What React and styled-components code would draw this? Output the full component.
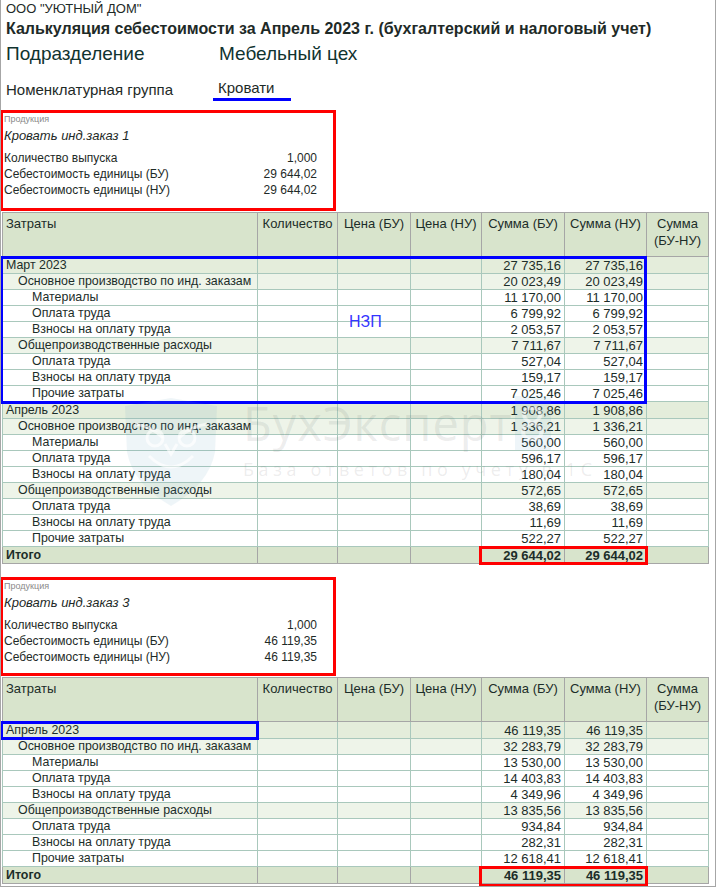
import React from "react";
import styled, { createGlobalStyle } from "styled-components";

const GlobalStyle = createGlobalStyle`
  body {
    margin: 0;
    background: #ffffff;
    font-family: "Liberation Sans", Arial, sans-serif;
    color: #1e2a27;
  }
`;

// widths of the table columns, px
const COLS = [255, 80, 73, 71, 83, 82, 62];
const HEAD_H = 45;

const firstTable = [
  { type: "group", name: "Март 2023", bu: "27 735,16", nu: "27 735,16" },
  { type: "sub", name: "Основное производство по инд. заказам", bu: "20 023,49", nu: "20 023,49" },
  { type: "item", name: "Материалы", bu: "11 170,00", nu: "11 170,00" },
  { type: "item", name: "Оплата труда", bu: "6 799,92", nu: "6 799,92" },
  { type: "item", name: "Взносы на оплату труда", bu: "2 053,57", nu: "2 053,57" },
  { type: "sub", name: "Общепроизводственные расходы", bu: "7 711,67", nu: "7 711,67" },
  { type: "item", name: "Оплата труда", bu: "527,04", nu: "527,04" },
  { type: "item", name: "Взносы на оплату труда", bu: "159,17", nu: "159,17" },
  { type: "item", name: "Прочие затраты", bu: "7 025,46", nu: "7 025,46" },
  { type: "group", name: "Апрель 2023", bu: "1 908,86", nu: "1 908,86" },
  { type: "sub", name: "Основное производство по инд. заказам", bu: "1 336,21", nu: "1 336,21" },
  { type: "item", name: "Материалы", bu: "560,00", nu: "560,00" },
  { type: "item", name: "Оплата труда", bu: "596,17", nu: "596,17" },
  { type: "item", name: "Взносы на оплату труда", bu: "180,04", nu: "180,04" },
  { type: "sub", name: "Общепроизводственные расходы", bu: "572,65", nu: "572,65" },
  { type: "item", name: "Оплата труда", bu: "38,69", nu: "38,69" },
  { type: "item", name: "Взносы на оплату труда", bu: "11,69", nu: "11,69" },
  { type: "item", name: "Прочие затраты", bu: "522,27", nu: "522,27" },
  { type: "total", name: "Итого", bu: "29 644,02", nu: "29 644,02" },
];

const secondTable = [
  { type: "group", name: "Апрель 2023", bu: "46 119,35", nu: "46 119,35" },
  { type: "sub", name: "Основное производство по инд. заказам", bu: "32 283,79", nu: "32 283,79" },
  { type: "item", name: "Материалы", bu: "13 530,00", nu: "13 530,00" },
  { type: "item", name: "Оплата труда", bu: "14 403,83", nu: "14 403,83" },
  { type: "item", name: "Взносы на оплату труда", bu: "4 349,96", nu: "4 349,96" },
  { type: "sub", name: "Общепроизводственные расходы", bu: "13 835,56", nu: "13 835,56" },
  { type: "item", name: "Оплата труда", bu: "934,84", nu: "934,84" },
  { type: "item", name: "Взносы на оплату труда", bu: "282,31", nu: "282,31" },
  { type: "item", name: "Прочие затраты", bu: "12 618,41", nu: "12 618,41" },
  { type: "total", name: "Итого", bu: "46 119,35", nu: "46 119,35" },
];

const rowBg = {
  group: "#e4eddb",
  sub: "#eef4e9",
  item: "#ffffff",
  total: "#d8e4cc",
};

const indent = { group: 3, sub: 15, item: 29, total: 3 };
const rowHeight = { group: 17, sub: 16, item: 16, total: 17 };

// top of row i, measured from the top of the table
const rowTop = (rows, i) =>
  HEAD_H + rows.slice(0, i).reduce((a, r) => a + rowHeight[r.type], 0);
const colLeft = (i) => COLS.slice(0, i).reduce((a, b) => a + b, 0);

const Page = styled.div`
  position: relative;
  width: 716px;
  min-height: 887px;
  box-sizing: border-box;
  border: 1px solid #a6a6a6;
  border-top: none;
  overflow: hidden;
`;

const Heading = styled.div`
  padding: 1px 0 0 5px;
`;

const Company = styled.div`
  font-size: 13px;
  line-height: 16px;
`;

const Title = styled.div`
  font-size: 16px;
  line-height: 20px;
  font-weight: bold;
  margin-top: 2px;
`;

const InfoRow = styled.div`
  display: grid;
  grid-template-columns: 207px auto;
  align-items: center;
  margin-top: ${(p) => p.$gap}px;
  font-size: ${(p) => p.$size}px;
  line-height: ${(p) => p.$line}px;
  color: ${(p) => (p.$dark ? "#10332f" : "#1e2a27")};
`;

const InfoValue = styled.span`
  justify-self: start;
  padding-left: ${(p) => p.$pad}px;
  width: ${(p) => (p.$underline ? "73px" : "auto")};
  border-bottom: ${(p) => (p.$underline ? "3px solid #0000ff" : "none")};
`;

const ProductBox = styled.div`
  box-sizing: border-box;
  width: 336px;
  height: ${(p) => p.$h}px;
  margin-top: ${(p) => p.$top}px;
  margin-left: -1px;
  border: 3px solid #ff0000;
  padding: 0 16px 0 1px;
`;

const Caption = styled.div`
  font-size: 9px;
  line-height: 12px;
  color: #8a8a8a;
`;

const ProductName = styled.div`
  font-size: 13px;
  line-height: 18px;
  font-style: italic;
  margin: 2px 0 5px;
`;

const ParamRow = styled.div`
  display: flex;
  justify-content: space-between;
  font-size: 12px;
  line-height: 16px;
`;

const TableWrap = styled.div`
  position: relative;
  margin-left: 1px;
  margin-top: ${(p) => p.$top}px;
  width: 706px;
`;

const Grid = styled.table`
  width: 706px;
  table-layout: fixed;
  border-collapse: collapse;
  font-size: 12px;
  color: #1c2d29;
`;

const Head = styled.th`
  height: ${HEAD_H - 1}px;
  padding: 2px 2px 0 ${(p) => (p.$left ? 3 : 2)}px;
  box-sizing: border-box;
  vertical-align: top;
  text-align: ${(p) => (p.$left ? "left" : "center")};
  font-size: 13px;
  font-weight: normal;
  line-height: 17px;
  background: #d8e4cc;
  border: 1px solid #a6a6a6;
`;

const Row = styled.tr`
  height: ${(p) => rowHeight[p.$type]}px;
  background: ${(p) => rowBg[p.$type]};
  font-weight: ${(p) => (p.$type === "total" ? "bold" : "normal")};
`;

const Cell = styled.td`
  padding: 0 3px 0 ${(p) => p.$indent || 3}px;
  line-height: 15px;
  white-space: nowrap;
  overflow: hidden;
  font-size: ${(p) => (p.$num ? 13 : 12.4)}px;
  text-align: ${(p) => (p.$num ? "right" : "left")};
  border: 1px solid ${(p) => (p.$total ? "#a6a6a6" : "#a9c8bc")};
`;

const Frame = styled.div`
  position: absolute;
  box-sizing: border-box;
  pointer-events: none;
  border: 3px solid ${(p) => p.$color};
`;

const Note = styled.div`
  position: absolute;
  left: 347px;
  top: 101px;
  font-size: 16px;
  color: #3535ff;
`;

const Watermark = styled.div`
  position: absolute;
  left: 120px;
  top: 396px;
  display: flex;
  align-items: flex-start;
  gap: 22px;
  pointer-events: none;
  opacity: 0.8;
`;

const MarkText = styled.div`
  display: flex;
  flex-direction: column;
  font-family: "Open Sans", "Liberation Sans", sans-serif;
  color: rgba(90, 100, 100, 0.14);
`;

const MarkName = styled.div`
  font-size: 47px;
  line-height: 54px;
  letter-spacing: 1px;
`;

const MarkEight = styled.span`
  display: inline-block;
  margin-left: 2px;
  padding: 0 4px;
  color: rgba(255, 255, 255, 0.6);
  background: rgba(90, 160, 200, 0.13);
`;

const MarkSub = styled.div`
  font-size: 18px;
  line-height: 22px;
  letter-spacing: 4.6px;
  margin-top: 8px;
`;

const Shield = () => (
  <svg width="100" height="112" viewBox="0 0 100 112">
    <path
      d="M4 10 L50 2 L96 10 L94 56 Q88 88 50 110 Q12 88 6 56 Z"
      fill="rgba(110,170,200,0.14)"
    />
    <g fill="none" stroke="rgba(255,255,255,0.7)" strokeWidth="3">
      <circle cx="34" cy="42" r="8" />
      <circle cx="66" cy="42" r="8" />
      <path d="M14 28 Q30 30 42 42 M86 28 Q70 30 58 42" />
      <path d="M44 48 L50 58 L56 48" />
      <path d="M28 60 Q50 82 72 60" />
    </g>
  </svg>
);

const CostTable = ({ rows, top, children }) => (
  <TableWrap $top={top}>
    <Grid>
      <colgroup>
        {COLS.map((w, i) => (
          <col key={i} style={{ width: w }} />
        ))}
      </colgroup>
      <thead>
        <tr>
          <Head $left>Затраты</Head>
          <Head>Количество</Head>
          <Head>Цена (БУ)</Head>
          <Head>Цена (НУ)</Head>
          <Head>Сумма (БУ)</Head>
          <Head>Сумма (НУ)</Head>
          <Head>
            Сумма
            <br />
            (БУ-НУ)
          </Head>
        </tr>
      </thead>
      <tbody>
        {rows.map((r, i) => {
          const total = r.type === "total";
          return (
            <Row key={i} $type={r.type}>
              <Cell $indent={indent[r.type]} $total={total}>
                {r.name}
              </Cell>
              <Cell $total={total} />
              <Cell $total={total} />
              <Cell $total={total} />
              <Cell $num $total={total}>
                {r.bu}
              </Cell>
              <Cell $num $total={total}>
                {r.nu}
              </Cell>
              <Cell $total={total} />
            </Row>
          );
        })}
      </tbody>
    </Grid>
    {children}
  </TableWrap>
);

const Product = ({ name, qty, bu, nu, top, h }) => (
  <ProductBox $top={top} $h={h}>
    <Caption>Продукция</Caption>
    <ProductName>{name}</ProductName>
    <ParamRow>
      <span>Количество выпуска</span>
      <span>{qty}</span>
    </ParamRow>
    <ParamRow>
      <span>Себестоимость единицы (БУ)</span>
      <span>{bu}</span>
    </ParamRow>
    <ParamRow>
      <span>Себестоимость единицы (НУ)</span>
      <span>{nu}</span>
    </ParamRow>
  </ProductBox>
);

const TotalFrame = ({ rows, extra }) => {
  const last = rows.length - 1;
  return (
    <Frame
      $color="#ff0000"
      style={{
        left: colLeft(4) - 2,
        top: rowTop(rows, last) - 1,
        width: COLS[4] + COLS[5] + 4,
        height: rowHeight.total + 2 + extra,
      }}
    />
  );
};

export default function App() {
  return (
    <>
      <GlobalStyle />
      <Page>
        <Heading>
          <Company>ООО "УЮТНЫЙ ДОМ"</Company>
          <Title>
            Калькуляция себестоимости за Апрель 2023 г. (бухгалтерский и налоговый учет)
          </Title>
          <InfoRow $gap={3} $size={19} $line={24} $dark>
            <span>Подразделение</span>
            <InfoValue $pad={6}>Мебельный цех</InfoValue>
          </InfoRow>
          <InfoRow $gap={12} $size={15} $line={20}>
            <span>Номенклатурная группа</span>
            <InfoValue $pad={5} $underline>
              Кровати
            </InfoValue>
          </InfoRow>
        </Heading>

        <Product
          top={9}
          h={101}
          name="Кровать инд.заказ 1"
          qty="1,000"
          bu="29 644,02"
          nu="29 644,02"
        />
        <CostTable rows={firstTable} top={1}>
          <Frame
            $color="#0000ff"
            style={{
              left: -2,
              top: HEAD_H - 1,
              width: colLeft(6) + 3,
              height: rowTop(firstTable, 9) - HEAD_H + 3,
            }}
          />
          <Note>НЗП</Note>
          <TotalFrame rows={firstTable} extra={0} />
        </CostTable>

        <Product
          top={13}
          h={99}
          name="Кровать инд.заказ 3"
          qty="1,000"
          bu="46 119,35"
          nu="46 119,35"
        />
        <CostTable rows={secondTable} top={1}>
          <Frame
            $color="#0000ff"
            style={{ left: -2, top: HEAD_H - 1, width: COLS[0] + 4, height: rowHeight.group + 2 }}
          />
          <TotalFrame rows={secondTable} extra={2} />
        </CostTable>

        <Watermark>
          <Shield />
          <MarkText>
            <MarkName>
              БухЭксперт<MarkEight>8</MarkEight>
            </MarkName>
            <MarkSub>База ответов по учету в 1С</MarkSub>
          </MarkText>
        </Watermark>
      </Page>
    </>
  );
}
